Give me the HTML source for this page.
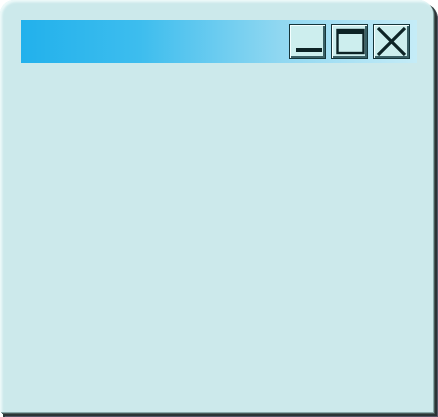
<!DOCTYPE html>
<html><head><style>
html,body{margin:0;padding:0;background:#fff;width:438px;height:417px;overflow:hidden}
.shadow{position:absolute;left:3px;top:3px;width:435px;height:414px;border-radius:14px 16px 0 0;background:linear-gradient(90deg,#2a3a3a,#6a8080 40%,#2a3a3a);}
.win{position:absolute;left:0;top:0;width:433px;height:412px;border-radius:14px 14px 0 0;background:#cce9eb;box-shadow:inset 2px 2px 2px #eefafa, 1px 1px 0 #8aa,2px 2px 0 #4a5a5a,3px 3px 0 #2a3535,4px 4px 0 #2a3535,5px 5px 0 #556;}
.title{position:absolute;left:21px;top:20px;width:396px;height:43px;background:linear-gradient(90deg,#22b1ec 0%,#3dbdee 30%,#8fd7f1 65%,#c5ecf7 100%);}
.btn{position:absolute;top:24px;width:35px;height:33px;background:#cdeeee;border:1px solid #15353a;box-shadow:inset 1px 1px 0 #f4ffff,inset -2px -2px 0 #3a6066;}
svg{position:absolute;left:0;top:0}
</style></head><body>
<div class="shadow"></div>
<div class="win"></div>
<div class="title"></div>
<div class="btn" style="left:289px"><svg width="35" height="33"><rect x="6" y="23" width="26" height="4" fill="#0d2326"/></svg></div>
<div class="btn" style="left:331px"><svg width="35" height="33"><rect x="5.5" y="5" width="26" height="23" fill="none" stroke="#0d2326" stroke-width="2.4"/><rect x="5" y="4" width="27" height="5" fill="#0d2326"/></svg></div>
<div class="btn" style="left:373px"><svg width="35" height="33"><path d="M4 3 L31 30 M31 3 L4 30" stroke="#0d2326" stroke-width="3.2"/></svg></div>
</body></html>
